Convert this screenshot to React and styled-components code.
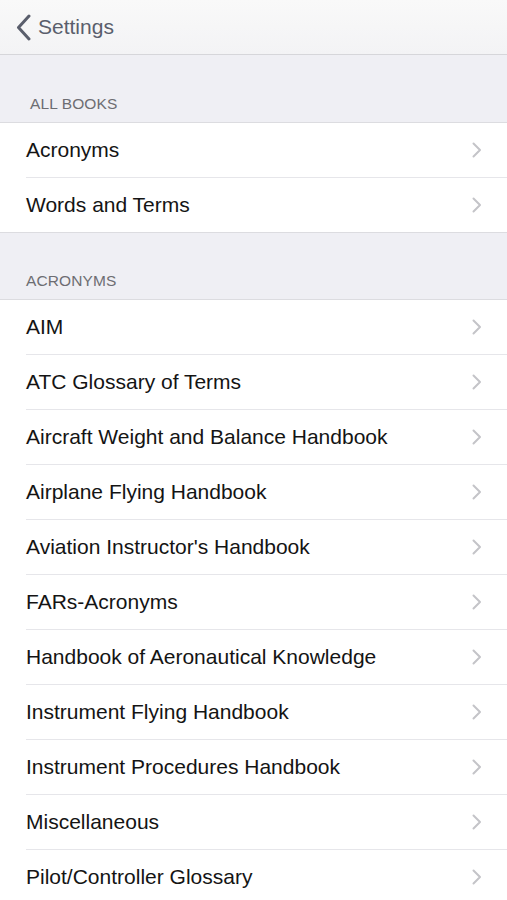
import React from "react";
import styled, { createGlobalStyle } from "styled-components";

const Global = createGlobalStyle`
  html, body { margin: 0; padding: 0; background: #efeff4; }
  body { font-family: "Liberation Sans", Arial, sans-serif; -webkit-font-smoothing: antialiased; }
`;

const Page = styled.div`
  width: 507px;
  min-height: 900px;
  background: #efeff4;
  overflow: hidden;
`;

const NavBar = styled.header`
  height: 54px;
  display: flex;
  align-items: center;
  padding-left: 15px;
  background: linear-gradient(#f9f9f9, #f3f3f5);
  border-bottom: 1px solid #d6d6da;
`;

const BackButton = styled.button`
  display: flex;
  align-items: center;
  gap: 6px;
  border: 0;
  background: none;
  padding: 0;
  color: #5a5e6c;
  font-family: inherit;
  font-size: 21px;
  cursor: pointer;
`;

const SectionHeader = styled.div`
  height: ${(p) => p.$h}px;
  box-sizing: border-box;
  display: flex;
  align-items: flex-end;
  padding: 0 0 9px ${(p) => p.$indent}px;
  color: #6d6d72;
  font-size: 15.5px;
  letter-spacing: 0.1px;
  border-bottom: 1px solid #dcdce0;
`;

const Group = styled.ul`
  list-style: none;
  margin: 0;
  padding: 0;
  background: #fff;
  border-bottom: 1px solid #dcdce0;
`;

const Row = styled.li`
  box-sizing: border-box;
  margin-left: 26px;
  padding-right: 25px;
  display: flex;
  align-items: center;
  justify-content: space-between;
  color: #141414;
  font-size: 21px;
  border-bottom: ${(p) => (p.$last ? "0" : "1px solid #e6e6ea")};
  height: ${(p) => (p.$last ? 54 : 55)}px;
`;

const Chevron = () => (
  <svg width="10" height="16" viewBox="0 0 10 16" fill="none">
    <path d="M1.5 1.5 L8 8 L1.5 14.5" stroke="#c4c4c8" strokeWidth="2" strokeLinecap="round" strokeLinejoin="round" />
  </svg>
);

const BackIcon = () => (
  <svg width="17" height="27" viewBox="0 0 17 27" fill="none">
    <path d="M14 2 L3.5 13.5 L14 25" stroke="#5a5e6c" strokeWidth="3" strokeLinecap="round" strokeLinejoin="round" />
  </svg>
);

const all = ["Acronyms", "Words and Terms"];
const acr = [
  "AIM",
  "ATC Glossary of Terms",
  "Aircraft Weight and Balance Handbook",
  "Airplane Flying Handbook",
  "Aviation Instructor's Handbook",
  "FARs-Acronyms",
  "Handbook of Aeronautical Knowledge",
  "Instrument Flying Handbook",
  "Instrument Procedures Handbook",
  "Miscellaneous",
  "Pilot/Controller Glossary",
];

const List = ({ items }) => (
  <Group>
    {items.map((t, i) => (
      <Row key={t} $last={i === items.length - 1}>
        <span>{t}</span>
        <Chevron />
      </Row>
    ))}
  </Group>
);

export default function App() {
  return (
    <Page>
      <Global />
      <NavBar>
        <BackButton>
          <BackIcon />
          Settings
        </BackButton>
      </NavBar>
      <SectionHeader $h={68} $indent={30}>ALL BOOKS</SectionHeader>
      <List items={all} />
      <SectionHeader $h={67} $indent={26}>ACRONYMS</SectionHeader>
      <List items={acr} />
    </Page>
  );
}
